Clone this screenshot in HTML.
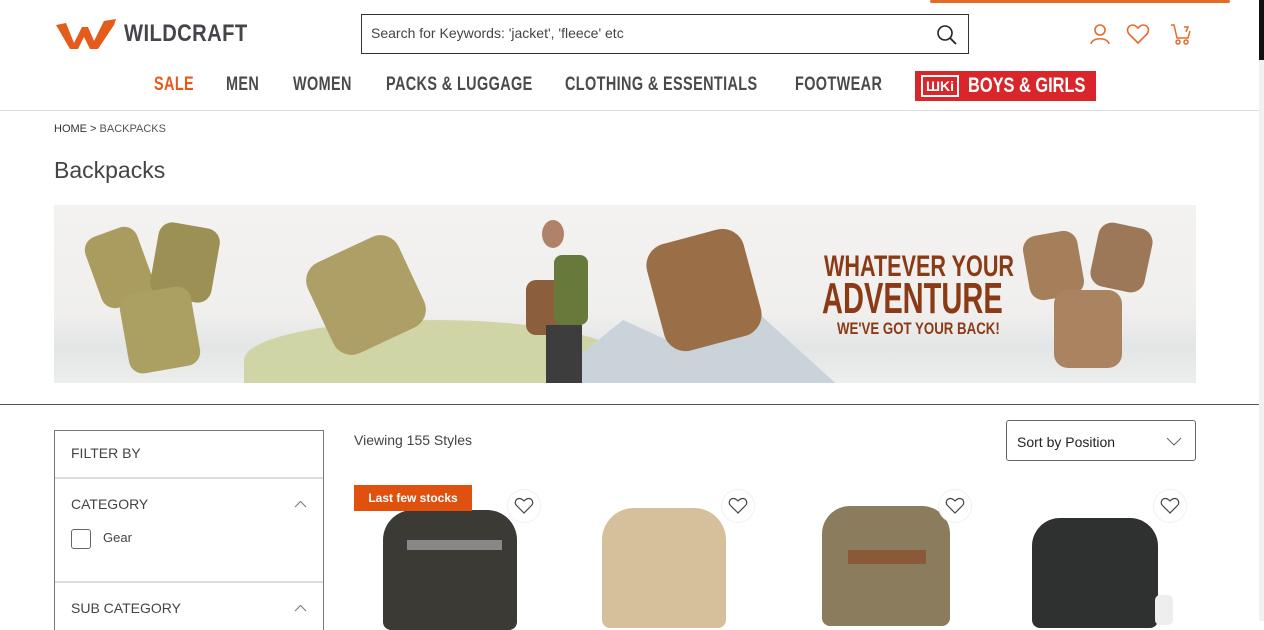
<!DOCTYPE html>
<html><head><meta charset="utf-8"><style>
*{margin:0;padding:0;box-sizing:border-box}
body{width:1264px;height:621px;overflow:hidden;background:#fff;font-family:"Liberation Sans",sans-serif;color:#333;position:relative}
.abs{position:absolute}
.nav a{position:absolute;top:74px;font:bold 19px "Liberation Sans",sans-serif;color:#4a4a4a;letter-spacing:0.5px;transform:scaleX(0.76);transform-origin:left top;white-space:nowrap}
.heart{position:absolute;width:34px;height:34px;border-radius:50%;border:1px solid #f0f0f0;background:#fff}
</style></head><body>
<div class="abs" style="left:930px;top:0;width:300px;height:3px;background:#e46a2a;border-radius:2px"></div>
<div class="abs" style="right:0;top:0;width:5px;height:621px;background:#f1f1f1"></div>
<div class="abs" style="right:0;top:0;width:5px;height:60px;background:#111"></div>
<!-- logo -->
<svg class="abs" style="left:54px;top:17px" width="64" height="34" viewBox="0 0 64 34"><path d="M2 8 L12 6 L20 26 L28 10 L34 10 L40 24 L50 4 L62 2 L60 8 L44 32 L36 32 L30 20 L24 32 L16 32 Z" fill="#e45b1b"/></svg>
<div class="abs" style="left:124px;top:20px;font:bold 24px 'Liberation Sans',sans-serif;color:#43454a;letter-spacing:0.5px;transform:scaleX(0.84);transform-origin:left top">WILDCRAFT</div>
<!-- search -->
<div class="abs" style="left:361px;top:14px;width:608px;height:40px;border:1px solid #333"></div>
<div class="abs" style="left:371px;top:25px;font-size:14px;color:#444">Search for Keywords: 'jacket', 'fleece' etc</div>
<svg class="abs" style="left:936px;top:24px" width="22" height="22" viewBox="0 0 22 22"><circle cx="9" cy="9" r="7" fill="none" stroke="#222" stroke-width="1.6"/><path d="M14 14 L20 20" stroke="#222" stroke-width="1.8"/></svg>
<svg class="abs" style="left:1088px;top:22px" width="24" height="24" viewBox="0 0 24 24" fill="none" stroke="#e46a2a" stroke-width="1.6"><circle cx="12" cy="8" r="5"/><path d="M3 22 C4 15 20 15 21 22"/></svg>
<svg class="abs" style="left:1126px;top:23px" width="24" height="22" viewBox="0 0 24 22" fill="none" stroke="#e46a2a" stroke-width="1.6"><path d="M12 20 L3 11 C0 7 2 2 7 2 C9 2 11 4 12 5 C13 4 15 2 17 2 C22 2 24 7 21 11 Z"/></svg>
<svg class="abs" style="left:1170px;top:23px" width="22" height="22" viewBox="0 0 22 22" fill="none" stroke="#e46a2a" stroke-width="1.5"><path d="M1 2 H4 L7 15 H18 L20 8"/><circle cx="8" cy="19" r="2"/><circle cx="16" cy="19" r="2"/><path d="M14 4 H18 L16 9"/></svg>
<div class="nav">
<a style="left:154px;color:#e45b1b">SALE</a>
<a style="left:226px">MEN</a>
<a style="left:293px">WOMEN</a>
<a style="left:386px">PACKS &amp; LUGGAGE</a>
<a style="left:565px">CLOTHING &amp; ESSENTIALS</a>
<a style="left:795px">FOOTWEAR</a>
</div>
<div class="abs" style="left:915px;top:71px;width:181px;height:30px;background:#d9262a"></div>
<div class="abs" style="left:921px;top:75px;width:38px;height:22px;border:2px solid #fff;color:#fff;font:bold 14px 'Liberation Sans';text-align:center;line-height:18px">ШKi</div>
<div class="abs" style="left:968px;top:74px;font:bold 21px 'Liberation Sans';color:#fff;transform:scaleX(0.78);transform-origin:left top;white-space:nowrap">BOYS &amp; GIRLS</div>
<div class="abs" style="left:0;top:110px;width:1259px;height:1px;background:#ddd"></div>
<div class="abs" style="left:54px;top:123px;font-size:11px;color:#333">HOME &gt; <span style="color:#555">BACKPACKS</span></div>
<div class="abs" style="left:54px;top:157px;font-size:23px;color:#444">Backpacks</div>
<!-- banner -->
<div class="abs" style="left:54px;top:205px;width:1142px;height:178px;background:linear-gradient(180deg,#f3f2f0 0%,#f0efed 60%,#e3e6e6 80%,#eceeec 100%);overflow:hidden">
<div class="abs" style="left:190px;top:115px;width:380px;height:80px;background:#cdd19a;border-radius:50% 50% 0 0;opacity:.85"></div>
<div class="abs" style="left:470px;top:95px;width:330px;height:100px;background:#cad3d9;clip-path:polygon(0 100%,30% 20%,50% 50%,70% 10%,100% 100%)"></div>
<div class="abs" style="left:38px;top:25px;width:55px;height:75px;background:#a99c5e;border-radius:14px;transform:rotate(-20deg)"></div>
<div class="abs" style="left:100px;top:20px;width:62px;height:75px;background:#9c9055;border-radius:14px;transform:rotate(10deg)"></div>
<div class="abs" style="left:70px;top:85px;width:72px;height:80px;background:#ab9f62;border-radius:14px;transform:rotate(-10deg)"></div>
<div class="abs" style="left:262px;top:40px;width:100px;height:100px;background:#ad9f65;border-radius:20px;transform:rotate(-25deg)"></div>
<div class="abs" style="left:472px;top:75px;width:50px;height:55px;background:#8b5e3c;border-radius:10px"></div>
<div class="abs" style="left:488px;top:15px;width:22px;height:28px;background:#b0826a;border-radius:50%"></div>
<div class="abs" style="left:500px;top:50px;width:34px;height:70px;background:#687a3b;border-radius:8px"></div>
<div class="abs" style="left:492px;top:120px;width:36px;height:58px;background:#3e3d3e"></div>
<div class="abs" style="left:600px;top:30px;width:100px;height:110px;background:#9a6f48;border-radius:22px;transform:rotate(-15deg)"></div>
<div class="abs" style="left:770px;top:48px;font:bold 30px 'Liberation Sans';color:#8a3b16;transform:scaleX(0.72);transform-origin:left top;line-height:28px;white-space:nowrap">WHATEVER YOUR</div>
<div class="abs" style="left:768px;top:72px;font:bold 44px 'Liberation Sans';color:#8a3b16;transform:scaleX(0.66);transform-origin:left top;line-height:44px">ADVENTURE</div>
<div class="abs" style="left:783px;top:114px;font:bold 17px 'Liberation Sans';color:#8a3b16;transform:scaleX(0.78);transform-origin:left top;white-space:nowrap">WE'VE GOT YOUR BACK!</div>
<div class="abs" style="left:972px;top:28px;width:55px;height:65px;background:#a57e5a;border-radius:14px;transform:rotate(-10deg)"></div>
<div class="abs" style="left:1040px;top:20px;width:55px;height:65px;background:#9d7858;border-radius:14px;transform:rotate(12deg)"></div>
<div class="abs" style="left:1000px;top:85px;width:68px;height:78px;background:#aa8460;border-radius:14px"></div>
</div>
<div class="abs" style="left:0;top:404px;width:1259px;height:1px;background:#555"></div>
<!-- filter -->
<div class="abs" style="left:54px;top:430px;width:270px;height:200px;border:1px solid #777;border-bottom:none"></div>
<div class="abs" style="left:71px;top:445px;font-size:14px;color:#444">FILTER BY</div>
<div class="abs" style="left:55px;top:477px;width:268px;height:2px;background:#ddd"></div>
<div class="abs" style="left:71px;top:496px;font-size:14px;color:#444">CATEGORY</div>
<svg class="abs" style="left:294px;top:500px" width="13" height="8"><path d="M1 7 L6.5 1.5 L12 7" fill="none" stroke="#777"/></svg>
<div class="abs" style="left:71px;top:529px;width:20px;height:20px;border:1px solid #666;border-radius:3px"></div>
<div class="abs" style="left:103px;top:530px;font-size:13px;color:#444">Gear</div>
<div class="abs" style="left:55px;top:581px;width:268px;height:2px;background:#ddd"></div>
<div class="abs" style="left:71px;top:600px;font-size:14px;color:#444">SUB CATEGORY</div>
<svg class="abs" style="left:294px;top:604px" width="13" height="8"><path d="M1 7 L6.5 1.5 L12 7" fill="none" stroke="#777"/></svg>
<div class="abs" style="left:354px;top:432px;font-size:14px;color:#444">Viewing 155 Styles</div>
<div class="abs" style="left:1006px;top:420px;width:190px;height:41px;border:1px solid #666;border-radius:3px"></div>
<div class="abs" style="left:1017px;top:434px;font-size:14px;color:#222">Sort by Position</div>
<svg class="abs" style="left:1166px;top:437px" width="16" height="10"><path d="M1 1 L8 8 L15 1" fill="none" stroke="#666"/></svg>
<!-- products -->
<div class="abs" style="left:383px;top:510px;width:134px;height:120px;background:#3c3a35;border-radius:30px 30px 8px 8px"></div>
<div class="abs" style="left:407px;top:540px;width:95px;height:10px;background:#888"></div>
<div class="abs" style="left:602px;top:508px;width:124px;height:120px;background:#d6c09b;border-radius:32px 32px 8px 8px"></div>
<div class="abs" style="left:822px;top:506px;width:128px;height:120px;background:#8c7c5e;border-radius:28px 28px 8px 8px"></div>
<div class="abs" style="left:848px;top:550px;width:78px;height:14px;background:#8a5a38"></div>
<div class="abs" style="left:1032px;top:518px;width:126px;height:110px;background:#2f3030;border-radius:28px 28px 8px 8px"></div>
<div class="abs" style="left:1155px;top:595px;width:18px;height:30px;background:#eee;border-radius:5px"></div>
<div class="abs" style="left:354px;top:485px;width:118px;height:26px;background:#e0510f;color:#fff;font:bold 12px 'Liberation Sans';text-align:center;line-height:26px">Last few stocks</div>
<div class="heart" style="left:507px;top:489px"></div>
<div class="heart" style="left:721px;top:489px"></div>
<div class="heart" style="left:938px;top:489px"></div>
<div class="heart" style="left:1153px;top:489px"></div>
<svg class="abs" style="left:514px;top:497px" width="20" height="18"><path d="M10 16 L2.5 8.5 C0 6 1.5 1.5 5.5 1.5 C7.5 1.5 9 3 10 4 C11 3 12.5 1.5 14.5 1.5 C18.5 1.5 20 6 17.5 8.5 Z" fill="none" stroke="#444" stroke-width="1.2"/></svg>
<svg class="abs" style="left:728px;top:497px" width="20" height="18"><path d="M10 16 L2.5 8.5 C0 6 1.5 1.5 5.5 1.5 C7.5 1.5 9 3 10 4 C11 3 12.5 1.5 14.5 1.5 C18.5 1.5 20 6 17.5 8.5 Z" fill="none" stroke="#444" stroke-width="1.2"/></svg>
<svg class="abs" style="left:945px;top:497px" width="20" height="18"><path d="M10 16 L2.5 8.5 C0 6 1.5 1.5 5.5 1.5 C7.5 1.5 9 3 10 4 C11 3 12.5 1.5 14.5 1.5 C18.5 1.5 20 6 17.5 8.5 Z" fill="none" stroke="#444" stroke-width="1.2"/></svg>
<svg class="abs" style="left:1160px;top:497px" width="20" height="18"><path d="M10 16 L2.5 8.5 C0 6 1.5 1.5 5.5 1.5 C7.5 1.5 9 3 10 4 C11 3 12.5 1.5 14.5 1.5 C18.5 1.5 20 6 17.5 8.5 Z" fill="none" stroke="#444" stroke-width="1.2"/></svg>
</body></html>
